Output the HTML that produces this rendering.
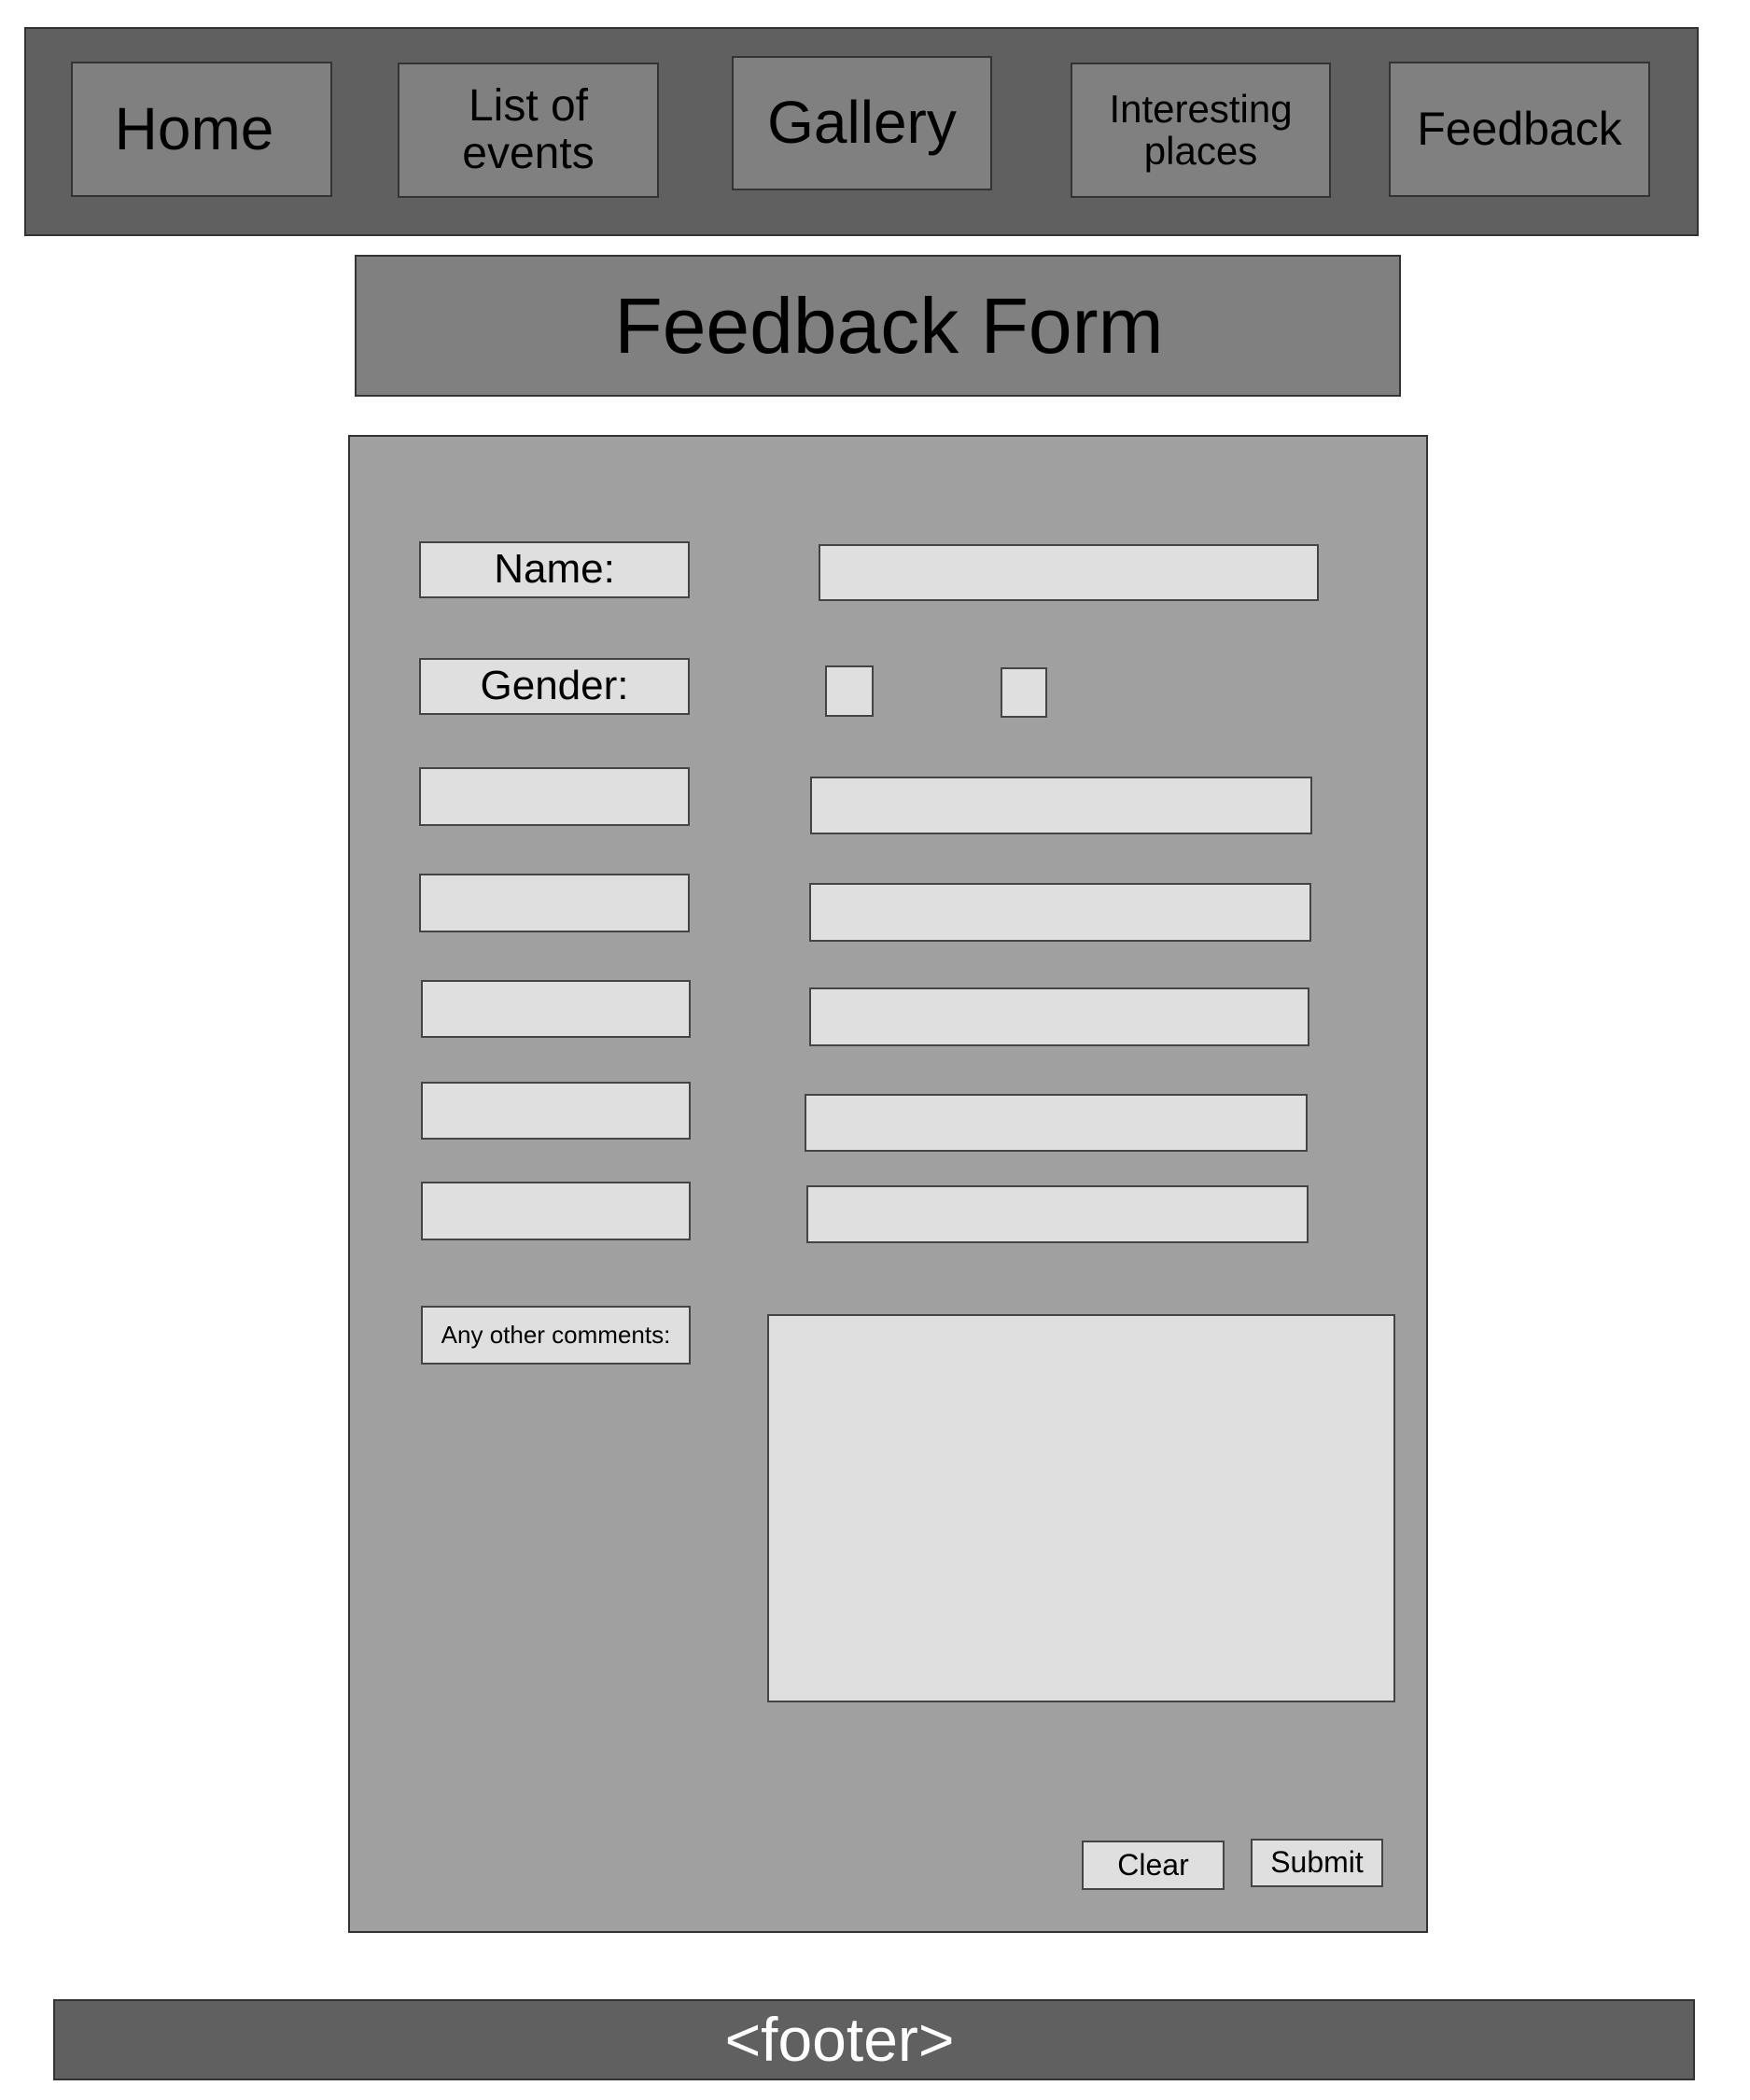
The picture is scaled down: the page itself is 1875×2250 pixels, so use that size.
<!DOCTYPE html>
<html><head><meta charset="utf-8"><style>
*{margin:0;padding:0;box-sizing:border-box}
body{width:1875px;height:2250px;background:#fff;position:relative;overflow:hidden;font-family:"Liberation Sans Narrow","Liberation Sans",sans-serif;color:#000}
.b{position:absolute;border:2px solid #333;display:flex;align-items:center;justify-content:center;text-align:center;line-height:1.05}
.nav{background:#606060}
.it{background:#808080}
.f{background:#dfdfdf;border-color:#444}
</style></head><body>
<div class="b nav" style="left:26px;top:29px;width:1794px;height:224px"></div>
<div class="b it" style="left:76px;top:66px;width:280px;height:145px;font-size:64px;padding-right:16px">Home</div>
<div class="b it" style="left:426px;top:67px;width:280px;height:145px;font-size:48px">List of<br>events</div>
<div class="b it" style="left:784px;top:60px;width:279px;height:144px;font-size:64px">Gallery</div>
<div class="b it" style="left:1147px;top:67px;width:279px;height:145px;font-size:42px">Interesting<br>places</div>
<div class="b it" style="left:1488px;top:66px;width:280px;height:145px;font-size:50px">Feedback</div>
<div class="b it" style="left:380px;top:273px;width:1121px;height:152px;font-size:84px;padding-left:24px">Feedback Form</div>
<div class="b" style="left:373px;top:466px;width:1157px;height:1605px;background:#a0a0a0"></div>
<div class="b f" style="left:449px;top:580px;width:290px;height:61px;font-size:44px">Name:</div>
<div class="b f" style="left:877px;top:583px;width:536px;height:61px"></div>
<div class="b f" style="left:449px;top:705px;width:290px;height:61px;font-size:44px">Gender:</div>
<div class="b f" style="left:884px;top:713px;width:52px;height:55px"></div>
<div class="b f" style="left:1072px;top:715px;width:50px;height:54px"></div>
<div class="b f" style="left:449px;top:822px;width:290px;height:63px"></div>
<div class="b f" style="left:868px;top:832px;width:538px;height:62px"></div>
<div class="b f" style="left:449px;top:936px;width:290px;height:63px"></div>
<div class="b f" style="left:867px;top:946px;width:538px;height:63px"></div>
<div class="b f" style="left:451px;top:1050px;width:289px;height:62px"></div>
<div class="b f" style="left:867px;top:1058px;width:536px;height:63px"></div>
<div class="b f" style="left:451px;top:1159px;width:289px;height:62px"></div>
<div class="b f" style="left:862px;top:1172px;width:539px;height:62px"></div>
<div class="b f" style="left:451px;top:1266px;width:289px;height:63px"></div>
<div class="b f" style="left:864px;top:1270px;width:538px;height:62px"></div>
<div class="b f" style="left:451px;top:1399px;width:289px;height:63px;font-size:26px">Any other comments:</div>
<div class="b f" style="left:822px;top:1408px;width:673px;height:416px"></div>
<div class="b f" style="left:1159px;top:1972px;width:153px;height:53px;font-size:32px">Clear</div>
<div class="b f" style="left:1340px;top:1970px;width:142px;height:52px;font-size:32px">Submit</div>
<div class="b nav" style="left:57px;top:2142px;width:1759px;height:87px;font-size:66px;color:#fff;padding-right:74px">&lt;footer&gt;</div>
</body></html>
